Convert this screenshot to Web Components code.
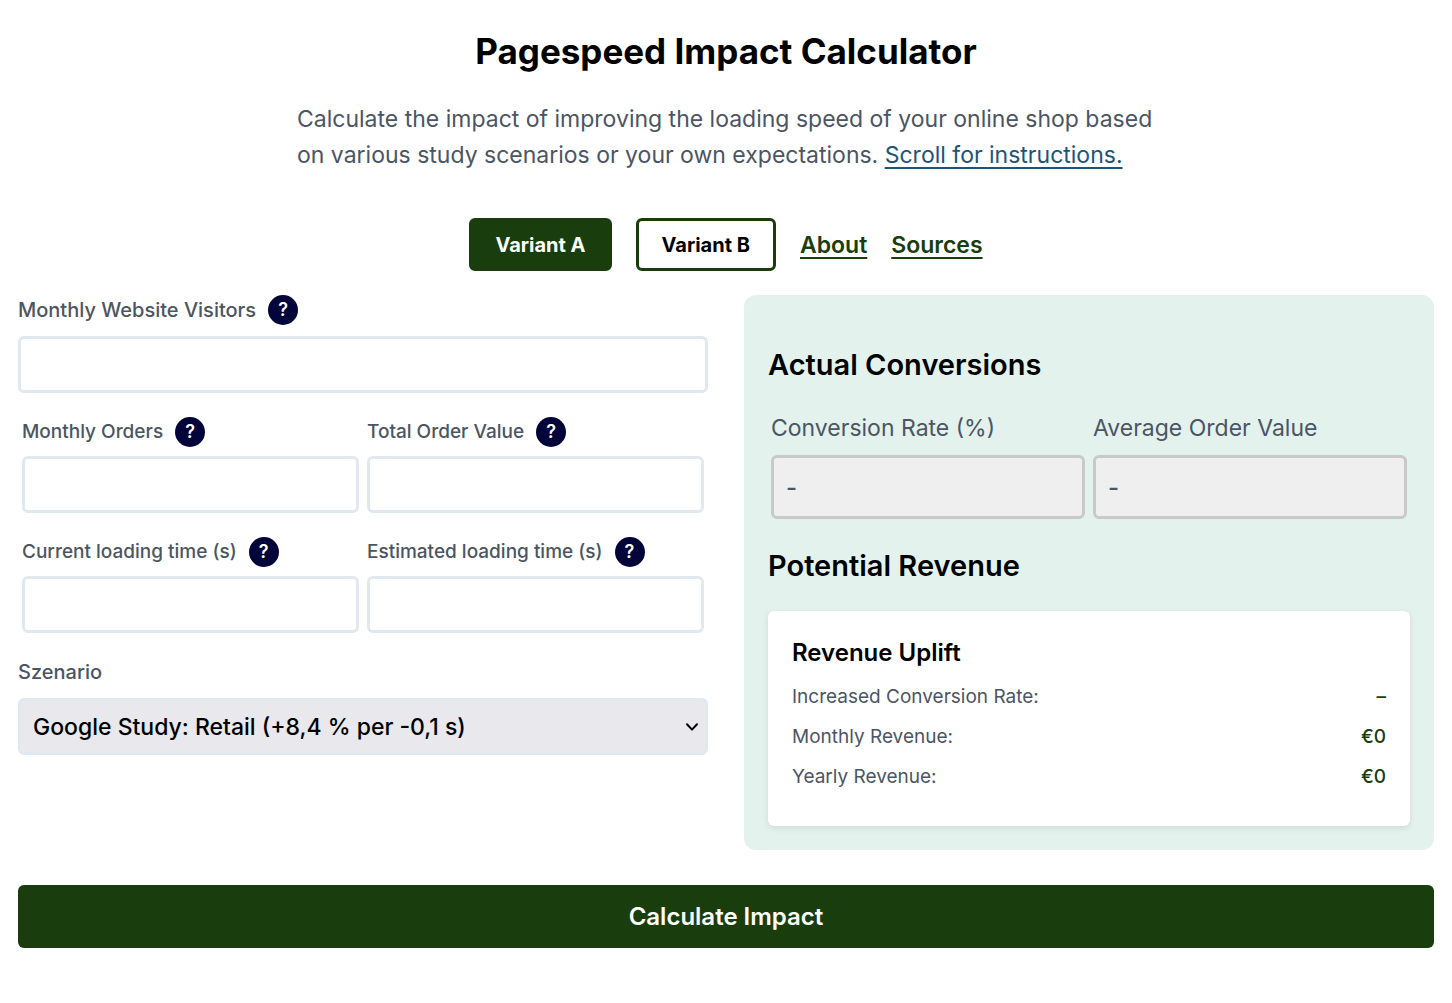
<!DOCTYPE html>
<html lang="en">
<head>
<meta charset="utf-8">
<meta name="viewport" content="width=device-width, initial-scale=1">
<title>Pagespeed Impact Calculator</title>
<style>
    body{
        margin: 0;
        background-color: white;
        color: #4b5563;
        font-family: Inter, "Liberation Sans", sans-serif;
        --color-primary: #193d0d;
        --color-link: #1d5478;
        --color-border: #e2e8f0;
        --color-help: #02053a;
        --color-panel: #e4f2ee;
    }
</style>
</head>
<body>
<pagespeed-calculator></pagespeed-calculator>

<script>
class HelpTip extends HTMLElement {
    constructor(){
        super();
        this.attachShadow({mode:'open'});

        this.shadowRoot.innerHTML=`
            <style>
                :host{
                    display: block;
                    position: relative;
                }

                button{
                    display: block;
                    width: 30px;
                    height: 30px;
                    padding: 0;
                    border: 0;
                    border-radius: 50%;
                    background-color: var(--color-help);
                    color: white;
                    font: 600 18px/30px Inter, sans-serif;
                    cursor: pointer;
                }

                div{
                    position: absolute;
                    z-index: 2;
                    left: 40px;
                    top: 0;
                    width: 240px;
                    padding: 10px;
                    border-radius: 4px;
                    background-color: var(--color-help);
                    color: white;
                    font-size: 14px;
                    line-height: 20px;
                }
            </style>
            <button type="button">?</button>`
        ;
    }

    connectedCallback(){
        this._button = this.shadowRoot.querySelector('button');
        this._button.addEventListener('mouseenter', this._showTip);
        this._button.addEventListener('mouseleave', this._removeTip);
    }

    _showTip =()=>{
        this._tip = document.createElement('div');
        this._tip.textContent = this.getAttribute('text');
        this.shadowRoot.appendChild(this._tip);
    }

    _removeTip =()=>{
        this._tip.remove();
    }
}

customElements.define('help-tip', HelpTip);


class NumberField extends HTMLElement {
    constructor(){
        super();
        this.attachShadow({mode:'open'});

        this.shadowRoot.innerHTML=`
            <style>
                :host{
                    display: grid;
                    gap: 9px;
                }

                :host([wide]){
                    gap: 11px;
                }

                .head{
                    display: flex;
                    align-items: center;
                    gap: 12px;
                }

                label{
                    font-size: 19px;
                    font-weight: 500;
                    line-height: 30px;
                }

                :host([wide]) label{
                    font-size: 20px;
                }

                input{
                    box-sizing: border-box;
                    width: 100%;
                    height: 57px;
                    padding: 0 12px;
                    border: 3px solid var(--color-border);
                    border-radius: 6px;
                    background-color: white;
                    font: 500 24px Inter, sans-serif;
                }
            </style>
            <div class="head">
                <label for="value"><slot></slot></label>
                <help-tip></help-tip>
            </div>
            <input id="value" type="text" inputmode="decimal">`
        ;
    }

    connectedCallback(){
        this.shadowRoot.querySelector('help-tip').setAttribute('text', this.getAttribute('help'));
    }

    get value(){
        return parseFloat(this.shadowRoot.querySelector('input').value.replace(',', '.')) || 0;
    }
}

customElements.define('number-field', NumberField);


class ScenarioSelect extends HTMLElement {
    constructor(){
        super();
        this.attachShadow({mode:'open'});

        this.shadowRoot.innerHTML=`
            <style>
                :host{
                    display: grid;
                    gap: 11px;
                }

                label{
                    font-size: 20px;
                    font-weight: 500;
                    line-height: 30px;
                }

                .box{
                    display: grid;
                    align-items: center;
                }

                select, svg{
                    grid-area: 1 / 1;
                }

                select{
                    appearance: none;
                    box-sizing: border-box;
                    width: 100%;
                    height: 57px;
                    padding: 0 40px 0 12px;
                    border: 3px solid var(--color-border);
                    border-radius: 6px;
                    background-color: #e8e8ed;
                    color: black;
                    font: 500 23px Inter, sans-serif;
                }

                svg{
                    justify-self: end;
                    margin-right: 9px;
                    pointer-events: none;
                }
            </style>
            <label for="scenario"><slot></slot></label>
            <div class="box">
                <select id="scenario">
                    <option value="8.4">Google Study: Retail (+8,4 % per -0,1 s)</option>
                </select>
                <svg width="14" height="10" viewBox="0 0 14 10" fill="none" stroke="black" stroke-width="2" stroke-linecap="round" stroke-linejoin="round">
                    <path d="M2 2.2l5 5.4 5-5.4"/>
                </svg>
            </div>`
        ;
    }

    get value(){
        return parseFloat(this.shadowRoot.querySelector('select').value);
    }
}

customElements.define('scenario-select', ScenarioSelect);


class ResultField extends HTMLElement {
    constructor(){
        super();
        this.attachShadow({mode:'open'});

        this.shadowRoot.innerHTML=`
            <style>
                :host{
                    display: grid;
                    gap: 9px;
                }

                label{
                    font-size: 23px;
                    line-height: 36px;
                }

                input{
                    box-sizing: border-box;
                    width: 100%;
                    height: 64px;
                    padding: 0 12px;
                    border: 3px solid #c9c9c9;
                    border-radius: 6px;
                    background-color: #efefef;
                    color: #4b5563;
                    font: 500 24px Inter, sans-serif;
                }
            </style>
            <label for="result"><slot></slot></label>
            <input id="result" type="text" value="-" readonly>`
        ;
    }

    set value(text){
        this.shadowRoot.querySelector('input').value = text;
    }
}

customElements.define('result-field', ResultField);


class VariantButton extends HTMLElement {
    constructor(){
        super();
        this.attachShadow({mode:'open'});

        this.shadowRoot.innerHTML=`
            <style>
                :host{
                    display: block;
                }

                button{
                    display: block;
                    height: 53px;
                    padding: 0 23px;
                    border: 3px solid var(--color-primary);
                    border-radius: 6px;
                    background-color: white;
                    color: black;
                    font: 700 20px Inter, sans-serif;
                    cursor: pointer;
                }

                :host([active]) button{
                    background-color: var(--color-primary);
                    color: white;
                }
            </style>
            <button type="button"><slot></slot></button>`
        ;
    }
}

customElements.define('variant-button', VariantButton);


class RevenueCard extends HTMLElement {
    constructor(){
        super();
        this.attachShadow({mode:'open'});

        this.shadowRoot.innerHTML=`
            <style>
                :host{
                    display: block;
                    padding: 24px;
                    border-radius: 6px;
                    background-color: white;
                    box-shadow: 0 2px 6px rgba(0, 0, 0, 0.1);
                }

                h3{
                    margin: 0;
                    color: black;
                    font-size: 24px;
                    font-weight: 600;
                    line-height: 36px;
                }

                dl{
                    display: grid;
                    gap: 12px;
                    margin: 12px 0 11px;
                    font-size: 19px;
                    line-height: 28px;
                }

                dl div{
                    display: flex;
                    justify-content: space-between;
                }

                dd{
                    margin: 0;
                    color: var(--color-primary);
                    font-weight: 500;
                }
            </style>
            <h3>Revenue Uplift</h3>
            <dl>
                <div><dt>Increased Conversion Rate:</dt><dd id="rate">–</dd></div>
                <div><dt>Monthly Revenue:</dt><dd id="monthly">€0</dd></div>
                <div><dt>Yearly Revenue:</dt><dd id="yearly">€0</dd></div>
            </dl>`
        ;
    }

    update(rate, monthly){
        this.shadowRoot.querySelector('#rate').textContent = rate.toFixed(2) + '%';
        this.shadowRoot.querySelector('#monthly').textContent = '€' + Math.round(monthly);
        this.shadowRoot.querySelector('#yearly').textContent = '€' + Math.round(monthly * 12);
    }
}

customElements.define('revenue-card', RevenueCard);


class PagespeedCalculator extends HTMLElement {
    constructor(){
        super();
        this.attachShadow({mode:'open'});

        this.shadowRoot.innerHTML=`
            <style>
                :host{
                    display: block;
                    padding: 28px 18px 54px;
                }

                h1{
                    margin: 0;
                    color: black;
                    text-align: center;
                    font-size: 35px;
                    font-weight: 700;
                    line-height: 46px;
                }

                .intro{
                    max-width: 858px;
                    margin: 27px auto 0;
                    font-size: 23px;
                    line-height: 36px;
                }

                .intro a{
                    color: var(--color-link);
                    text-underline-offset: 4px;
                }

                nav{
                    display: flex;
                    justify-content: center;
                    align-items: center;
                    gap: 24px;
                    margin: 45px 0 24px;
                }

                nav a{
                    color: var(--color-primary);
                    font-size: 23px;
                    font-weight: 600;
                    text-underline-offset: 4px;
                }

                .columns{
                    display: grid;
                    grid-template-columns: 1fr 1fr;
                    gap: 36px;
                }

                .form{
                    display: grid;
                    align-content: start;
                    gap: 24px;
                }

                .pair{
                    display: grid;
                    grid-template-columns: 1fr 1fr;
                    gap: 8px;
                    padding: 0 4px;
                }

                .panel{
                    padding: 24px;
                    border-radius: 12px;
                    background-color: var(--color-panel);
                }

                .panel .pair{
                    padding: 0 3px;
                }

                h2{
                    margin: 28px 0 27px;
                    color: black;
                    font-size: 29px;
                    font-weight: 600;
                    line-height: 36px;
                }

                .pair + h2{
                    margin-top: 29px;
                }

                .submit{
                    display: block;
                    width: 100%;
                    height: 63px;
                    margin-top: 35px;
                    border: 0;
                    border-radius: 6px;
                    background-color: var(--color-primary);
                    color: white;
                    font: 600 24px Inter, sans-serif;
                    cursor: pointer;
                }

                @media (max-width: 900px){
                    .columns{
                        grid-template-columns: 1fr;
                    }
                }
            </style>
            <header>
                <h1>Pagespeed Impact Calculator</h1>
                <p class="intro">Calculate the impact of improving the loading speed of your online shop based on various study scenarios or your own expectations. <a href="#instructions">Scroll for instructions.</a></p>
            </header>
            <nav>
                <variant-button active>Variant A</variant-button>
                <variant-button>Variant B</variant-button>
                <a href="#about">About</a>
                <a href="#sources">Sources</a>
            </nav>
            <main>
                <div class="columns">
                    <section class="form">
                        <number-field wide id="visitors" help="Visitors of your shop per month">Monthly Website Visitors</number-field>
                        <div class="pair">
                            <number-field id="orders" help="Orders placed per month">Monthly Orders</number-field>
                            <number-field id="total" help="Value of all orders per month">Total Order Value</number-field>
                        </div>
                        <div class="pair">
                            <number-field id="current" help="Loading time today, in seconds">Current loading time (s)</number-field>
                            <number-field id="estimated" help="Loading time you expect, in seconds">Estimated loading time (s)</number-field>
                        </div>
                        <scenario-select>Szenario</scenario-select>
                    </section>
                    <section class="panel">
                        <h2>Actual Conversions</h2>
                        <div class="pair">
                            <result-field id="rate">Conversion Rate (%)</result-field>
                            <result-field id="average">Average Order Value</result-field>
                        </div>
                        <h2>Potential Revenue</h2>
                        <revenue-card></revenue-card>
                    </section>
                </div>
                <button class="submit" type="button">Calculate Impact</button>
            </main>`
        ;
    }

    connectedCallback(){
        this.shadowRoot.querySelector('.submit').addEventListener('click', this._calculate);
        this._variants = this.shadowRoot.querySelectorAll('variant-button');
        this._variants.forEach(variant => variant.addEventListener('click', this._selectVariant));
    }

    _selectVariant =(event)=>{
        this._variants.forEach(variant => variant.toggleAttribute('active', variant === event.currentTarget));
    }

    _calculate =()=>{
        const get = id => this.shadowRoot.querySelector('#' + id).value;
        const visitors = get('visitors');
        const orders = get('orders');
        if(!visitors || !orders){
            return;
        }
        const rate = orders / visitors * 100;
        const average = get('total') / orders;
        // the study gives the uplift for each 0.1 s saved
        const steps = (get('current') - get('estimated')) * 10;
        const uplift = steps * this.shadowRoot.querySelector('scenario-select').value / 100;

        this.shadowRoot.querySelector('#rate').value = rate.toFixed(2);
        this.shadowRoot.querySelector('#average').value = average.toFixed(2);
        this.shadowRoot.querySelector('revenue-card').update(rate * (1 + uplift), orders * average * uplift);
    }
}

customElements.define('pagespeed-calculator', PagespeedCalculator);
</script>
</body>
</html>
